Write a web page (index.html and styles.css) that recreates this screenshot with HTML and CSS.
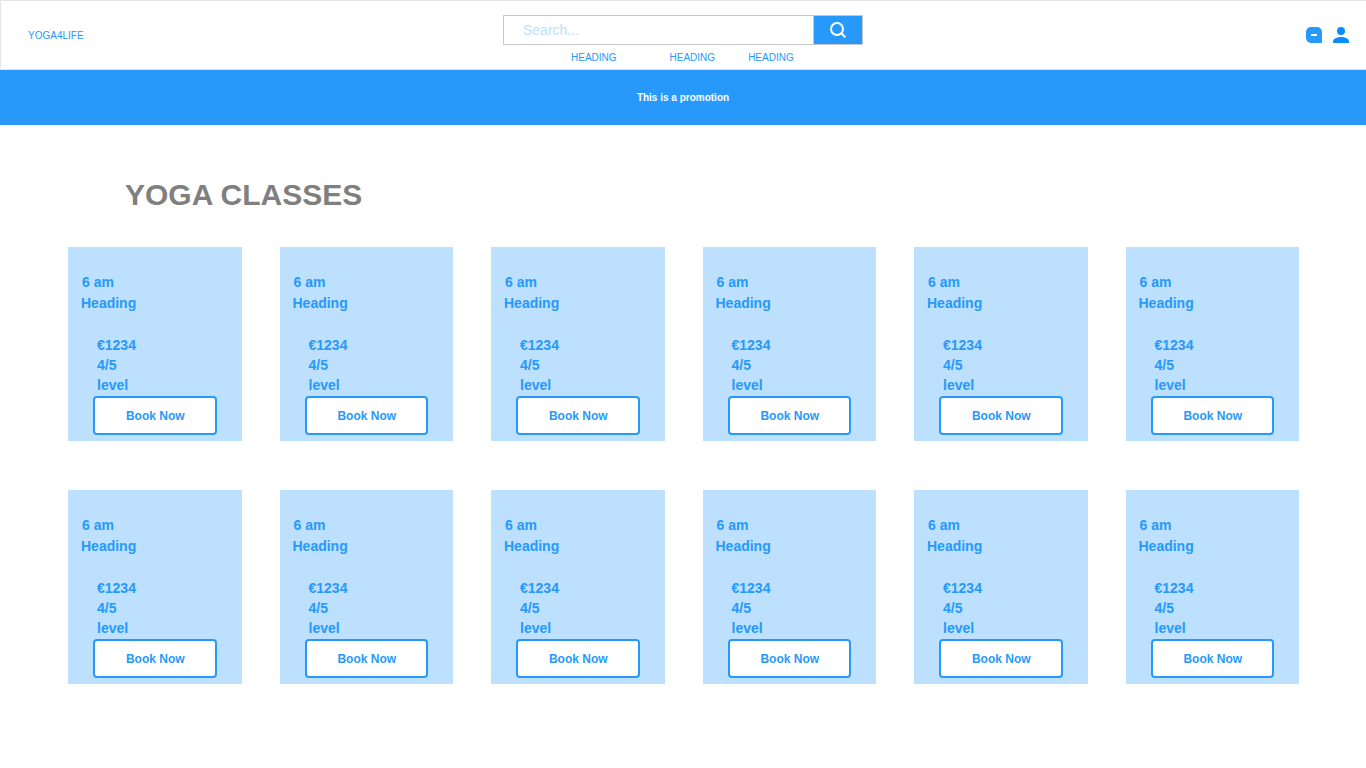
FILE: index.html
```html
<!DOCTYPE html>
<html lang="en">
<head>
<meta charset="utf-8">
<title>Yoga4Life</title>
<link rel="stylesheet" href="styles.css">
</head>
<body>
<header class="header">
  <a class="brand" href="#">YOGA4LIFE</a>
  <div class="center">
    <form class="search" role="search">
      <input class="search-input" type="text" placeholder="Search..." aria-label="Search">
      <button class="search-button" type="submit" aria-label="Search">
        <svg width="16" height="16" viewBox="0 0 16 16" fill="none" stroke="#fff" stroke-width="2"><circle cx="7" cy="7" r="6"/><path d="M11 11l4.300 4.300"/></svg>
      </button>
    </form>
    <nav class="nav">
      <a href="#">HEADING</a>
      <a class="nav-second" href="#">HEADING</a>
      <a class="nav-third" href="#">HEADING</a>
    </nav>
  </div>
  <div class="actions">
    <button class="icon-button" type="button" aria-label="Bag">
      <svg width="16" height="16" viewBox="0 0 16 16"><path fill="#2699fb" d="M5 0h6a5 5 0 0 1 5 5v10a1 1 0 0 1-1 1H5a5 5 0 0 1-5-5V5a5 5 0 0 1 5-5z"/><path fill="#fff" d="M5 7h6v2H5z"/></svg>
    </button>
    <button class="icon-button" type="button" aria-label="Account">
      <svg width="16" height="16" viewBox="0 0 16 16" fill="#0a8cff"><circle cx="8" cy="4" r="4"/><path d="M8 10c4 0 8 1.600 8 4.500V16H0v-1.500C0 11.600 4 10 8 10z"/></svg>
    </button>
  </div>
</header>
<p class="promo">This is a promotion</p>
<main>
  <h1 class="title">YOGA CLASSES</h1>
  <div class="grid" id="classes"></div>
</main>
<template id="card">
  <article class="card">
    <p class="time">6 am</p>
    <h2 class="name">Heading</h2>
    <ul class="details"><li>€1234</li><li>4/5</li><li>level</li></ul>
    <button class="book" type="button">Book Now</button>
  </article>
</template>
<script src="script.js"></script>
</body>
</html>
```
FILE: styles.css
```css
* {
  box-sizing: border-box;
}

body {
  margin: 0;
  background: #fff;
  color: #2699fb;
  font-family: "Liberation Sans", Arial, sans-serif;
}

h1, h2, p, ul {
  margin: 0;
  padding: 0;
}

a {
  color: inherit;
  text-decoration: none;
}

button {
  font-family: inherit;
  color: inherit;
  cursor: pointer;
}

svg {
  display: block;
}

.header {
  display: grid;
  grid-template-columns: 1fr 360px 1fr;
  align-items: center;
  min-height: 70px;
  padding-right: 1px;
  border: 1px solid #e5e5e5;
  border-right: 0;
  font-size: 10px;
  line-height: 12px;
}

.brand {
  justify-self: start;
  padding: 2px 0 0 27px;
}

.center {
  align-self: start;
  padding-top: 14px;
}

.search {
  display: flex;
  height: 30px;
  border: 1px solid #c8c8c8;
}

.search-input {
  flex: 1;
  min-width: 0;
  padding: 0 19px;
  border: 0;
  background: #fff;
  color: #2699fb;
  font: 14px "Liberation Sans", Arial, sans-serif;
}

.search-input::placeholder {
  color: #bce0fd;
  opacity: 1;
}

.search-button {
  display: grid;
  place-items: center;
  width: 49px;
  padding: 0;
  border: 0;
  border-left: 1px solid #c8c8c8;
  background: #2699fb;
}

.nav {
  display: flex;
  padding: 7px 0 0 68px;
}

.nav-second {
  margin-left: 53px;
}

.nav-third {
  margin-left: 33px;
}

.actions {
  display: flex;
  justify-content: flex-end;
  gap: 11px;
  padding-right: 16px;
}

.icon-button {
  padding: 0;
  border: 0;
  background: none;
}

.promo {
  padding: 20px;
  background: #2699fb;
  color: #fff;
  font-size: 10px;
  font-weight: bold;
  line-height: 15px;
  text-align: center;
}

.title {
  padding: 52px 125px 34px;
  color: #7f7f7f;
  font-size: 30px;
  line-height: 36px;
}

.grid {
  display: grid;
  grid-template-columns: repeat(6, 1fr);
  gap: 49px 38px;
  padding: 0 67px 84px 68px;
}

.card {
  padding: 25px 25px 6px 13px;
  background: #bce0fd;
  font-size: 14px;
  font-weight: bold;
  line-height: 21px;
}

.time {
  padding-left: 1px;
}

.name {
  font-size: 14px;
}

.details {
  padding: 21px 0 1px 16px;
  line-height: 20px;
  list-style: none;
}

.book {
  display: block;
  width: calc(100% - 12px);
  height: 39px;
  margin-left: 12px;
  padding: 0 0 0 1px;
  border: 2px solid #2699fb;
  border-radius: 4px;
  background: #fff;
  font-size: 12px;
  font-weight: bold;
}
```
FILE: script.js
```js
const grid = document.getElementById("classes");
const card = document.getElementById("card");
for (let i = 0; i < 12; i++) {
  grid.append(card.content.cloneNode(true));
}
```
